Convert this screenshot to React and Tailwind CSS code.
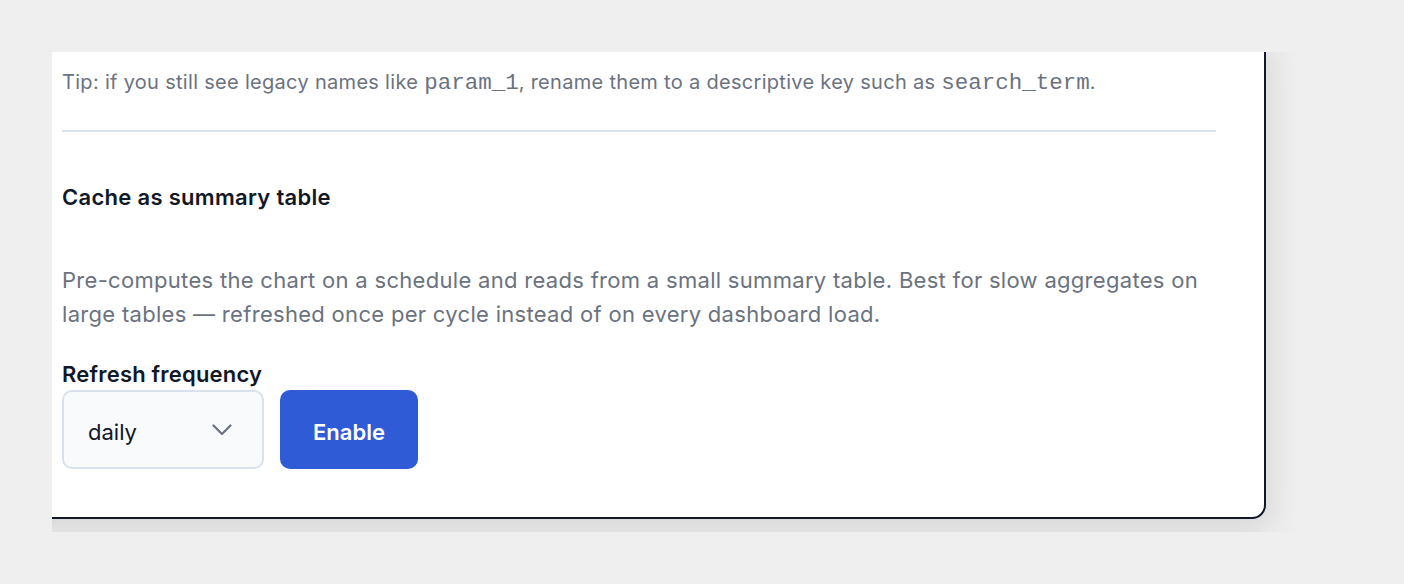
export default function App() {
  const sans = { fontFamily: 'Inter, "Noto Sans", sans-serif' };
  const mono = "font-['Liberation_Mono',monospace] text-[22.5px] leading-none tracking-normal";
  return (
    <div className="min-h-[584px] bg-[#efefef] pt-[52px] pl-[52px]" style={sans}>
      <div className="w-[1244px] h-[480px] overflow-hidden">
        <div className="-ml-[38px] -mt-[20px] w-[1252px] bg-white border-2 border-[#111827] rounded-[14px] shadow-[4px_12px_36px_rgba(0,0,0,0.11)] pl-[46px] pr-[48px] pt-[33px] pb-[48px]">
          <p className="text-[20px] leading-[30px] tracking-[0.3px] text-[#6b7280]">
            Tip: if you still see legacy names like <code className={mono}>param_1</code>, rename them to a descriptive key such as <code className={mono}>search_term</code>.
          </p>
          <div className="mt-[33px] h-[2px] bg-[#dbe3ee]" />
          <h3 className="mt-[50px] text-[22px] leading-[30px] tracking-[0.3px] font-semibold text-[#111827]">Cache as summary table</h3>
          <p className="mt-[51px] text-[22px] leading-[34px] tracking-[0.3px] text-[#6b7280]">
            Pre-computes the chart on a schedule and reads from a small summary table. Best for slow aggregates on large tables — refreshed once per cycle instead of on every dashboard load.
          </p>
          <label className="block mt-[28px] text-[22px] leading-[30px] tracking-[0.2px] font-semibold text-[#111827]">Refresh frequency</label>
          <div className="mt-[1px] flex gap-4">
            <div className="w-[202px] h-[79px] rounded-[10px] border-2 border-[#d9e1ec] bg-[#f8fafc] flex items-center justify-between pl-6 pr-[30px]">
              <span className="pt-[6px] text-[22px] text-[#111827]">daily</span>
              <svg width="20" height="12" viewBox="0 0 20 12" fill="none">
                <path d="M1.5 1.5 L10 10 L18.5 1.5" stroke="#6b7280" strokeWidth="2.2" strokeLinecap="round" strokeLinejoin="round" />
              </svg>
            </div>
            <button className="w-[138px] h-[79px] rounded-[10px] bg-[#2f5bd6] pt-[6px] text-white text-[22px] font-semibold">Enable</button>
          </div>
        </div>
      </div>
    </div>
  );
}
